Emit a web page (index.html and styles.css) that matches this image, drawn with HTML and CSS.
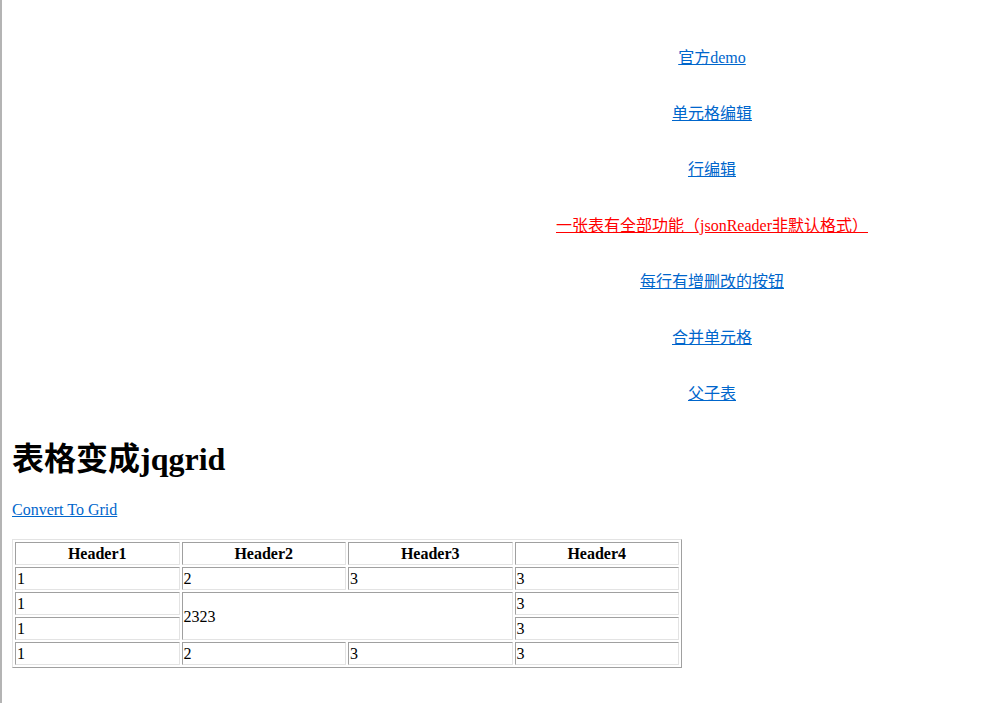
FILE: index.html
```html
<!DOCTYPE html>
<html lang="zh-CN">
<head>
    <meta charset="UTF-8">
    <title>jqgrid demo</title>
    <link rel="stylesheet" href="styles.css">
</head>
<body>
    <div class="nav">
        <a href="#">官方demo</a>
        <a href="#">单元格编辑</a>
        <a href="#">行编辑</a>
        <a href="#" class="hot">一张表有全部功能（jsonReader非默认格式）</a>
        <a href="#">每行有增删改的按钮</a>
        <a href="#">合并单元格</a>
        <a href="#">父子表</a>
    </div>

    <h1 class="title">表格变成jqgrid</h1>
    <a href="#" class="convert">Convert To Grid</a>

    <table class="grid" cellspacing="2">
        <tr>
            <th>Header1</th>
            <th>Header2</th>
            <th>Header3</th>
            <th>Header4</th>
        </tr>
        <tr>
            <td>1</td>
            <td>2</td>
            <td>3</td>
            <td>3</td>
        </tr>
        <tr>
            <td>1</td>
            <td colspan="2" rowspan="2">2323</td>
            <td>3</td>
        </tr>
        <tr>
            <td>1</td>
            <td>3</td>
        </tr>
        <tr>
            <td>1</td>
            <td>2</td>
            <td>3</td>
            <td>3</td>
        </tr>
    </table>
</body>
</html>
```

FILE: styles.css
```css
html {
    border-left: 2px solid #b4b4b4;
    min-height: 100%;
    box-sizing: border-box;
}
body {
    font-family: "Liberation Serif", "Noto Sans CJK SC", serif;
    font-size: 16px;
    margin: 0 10px;
    color: #000;
}
a {
    color: #0066cc;
}
.nav {
    display: flex;
    flex-direction: column;
    align-items: center;
    gap: 36px;
    margin-left: 426px;
    padding-top: 48px;
}
.nav a {
    line-height: 20px;
}
.nav a.hot {
    color: #ff0000;
}
.title {
    font-size: 32px;
    line-height: 37px;
    margin: 37px 0 22px;
}
.convert {
    display: inline-block;
    line-height: 20px;
}
.grid {
    width: 670px;
    margin-top: 19px;
    border: 1px solid;
    border-color: #e3e3e3 #a0a0a0 #a0a0a0 #e3e3e3;
    table-layout: fixed;
}
.grid th, .grid td {
    border: 1px solid;
    border-color: #a0a0a0 #e3e3e3 #e3e3e3 #a0a0a0;
    padding: 1px;
    line-height: 19px;
}
.grid td {
    text-align: left;
}
```
